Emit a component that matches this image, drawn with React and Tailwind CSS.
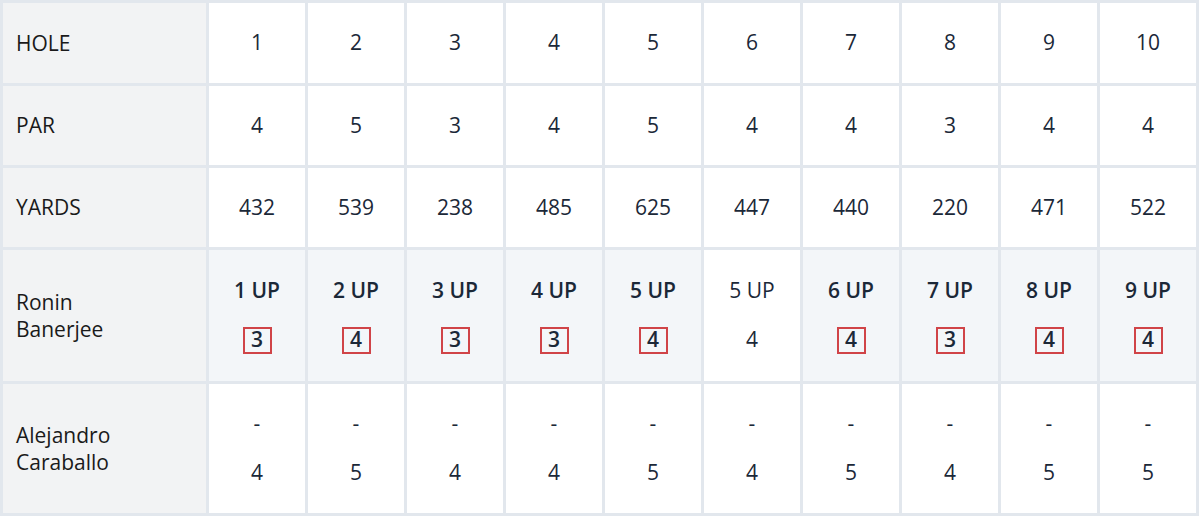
import React from 'react';

const holes = [1, 2, 3, 4, 5, 6, 7, 8, 9, 10];
const par = [4, 5, 3, 4, 5, 4, 4, 3, 4, 4];
const yards = [432, 539, 238, 485, 625, 447, 440, 220, 471, 522];

const ronin = [
  { status: '1 UP', score: 3, won: true },
  { status: '2 UP', score: 4, won: true },
  { status: '3 UP', score: 3, won: true },
  { status: '4 UP', score: 3, won: true },
  { status: '5 UP', score: 4, won: true },
  { status: '5 UP', score: 4, won: false },
  { status: '6 UP', score: 4, won: true },
  { status: '7 UP', score: 3, won: true },
  { status: '8 UP', score: 4, won: true },
  { status: '9 UP', score: 4, won: true }
];

const alejandro = [4, 5, 4, 4, 5, 4, 5, 4, 5, 5];

function Label({ children }) {
  return (
    <div className="flex items-center bg-[#f2f3f4] pl-[13px] text-[21px] leading-[27px] text-[#1a1a1a]">
      {children}
    </div>
  );
}

function NumCell({ value }) {
  return (
    <div className="flex items-center justify-center bg-white text-[21px] text-[#1b2838]">{value}</div>
  );
}

function MatchCell({ top, bottom, won, highlight, bold }) {
  return (
    <div
      className={`flex flex-col items-center justify-center gap-[21px] text-[21px] text-[#1b2838] ${
        highlight ? 'bg-[#f3f6f9]' : 'bg-white'
      }`}
    >
      <div className={`flex h-[28px] items-center ${bold ? 'font-semibold' : ''}`}>{top}</div>
      <div className="flex h-[28px] items-center justify-center">
        {won ? (
          <span className="flex h-[27px] w-[29px] items-center justify-center border-2 border-[#d04448] font-semibold">
            {bottom}
          </span>
        ) : (
          <span>{bottom}</span>
        )}
      </div>
    </div>
  );
}

export default function App() {
  return (
    <div
      className="grid h-[516px] w-[1199px] grid-cols-[203px_repeat(10,1fr)] grid-rows-[80px_79px_79px_131px_129px] gap-[3px] bg-[#e2e7ed] p-[3px]"
      style={{ fontFamily: '"Open Sans", "Noto Sans", sans-serif' }}
    >
      <Label>HOLE</Label>
      {holes.map((h) => (
        <NumCell key={`h${h}`} value={h} />
      ))}

      <Label>PAR</Label>
      {par.map((p, i) => (
        <NumCell key={`p${i}`} value={p} />
      ))}

      <Label>YARDS</Label>
      {yards.map((y, i) => (
        <NumCell key={`y${i}`} value={y} />
      ))}

      <Label>
        Ronin
        <br />
        Banerjee
      </Label>
      {ronin.map((r, i) => (
        <MatchCell key={`r${i}`} top={r.status} bottom={r.score} won={r.won} highlight={r.won} bold={r.won} />
      ))}

      <Label>
        Alejandro
        <br />
        Caraballo
      </Label>
      {alejandro.map((s, i) => (
        <MatchCell key={`a${i}`} top="-" bottom={s} />
      ))}
    </div>
  );
}
